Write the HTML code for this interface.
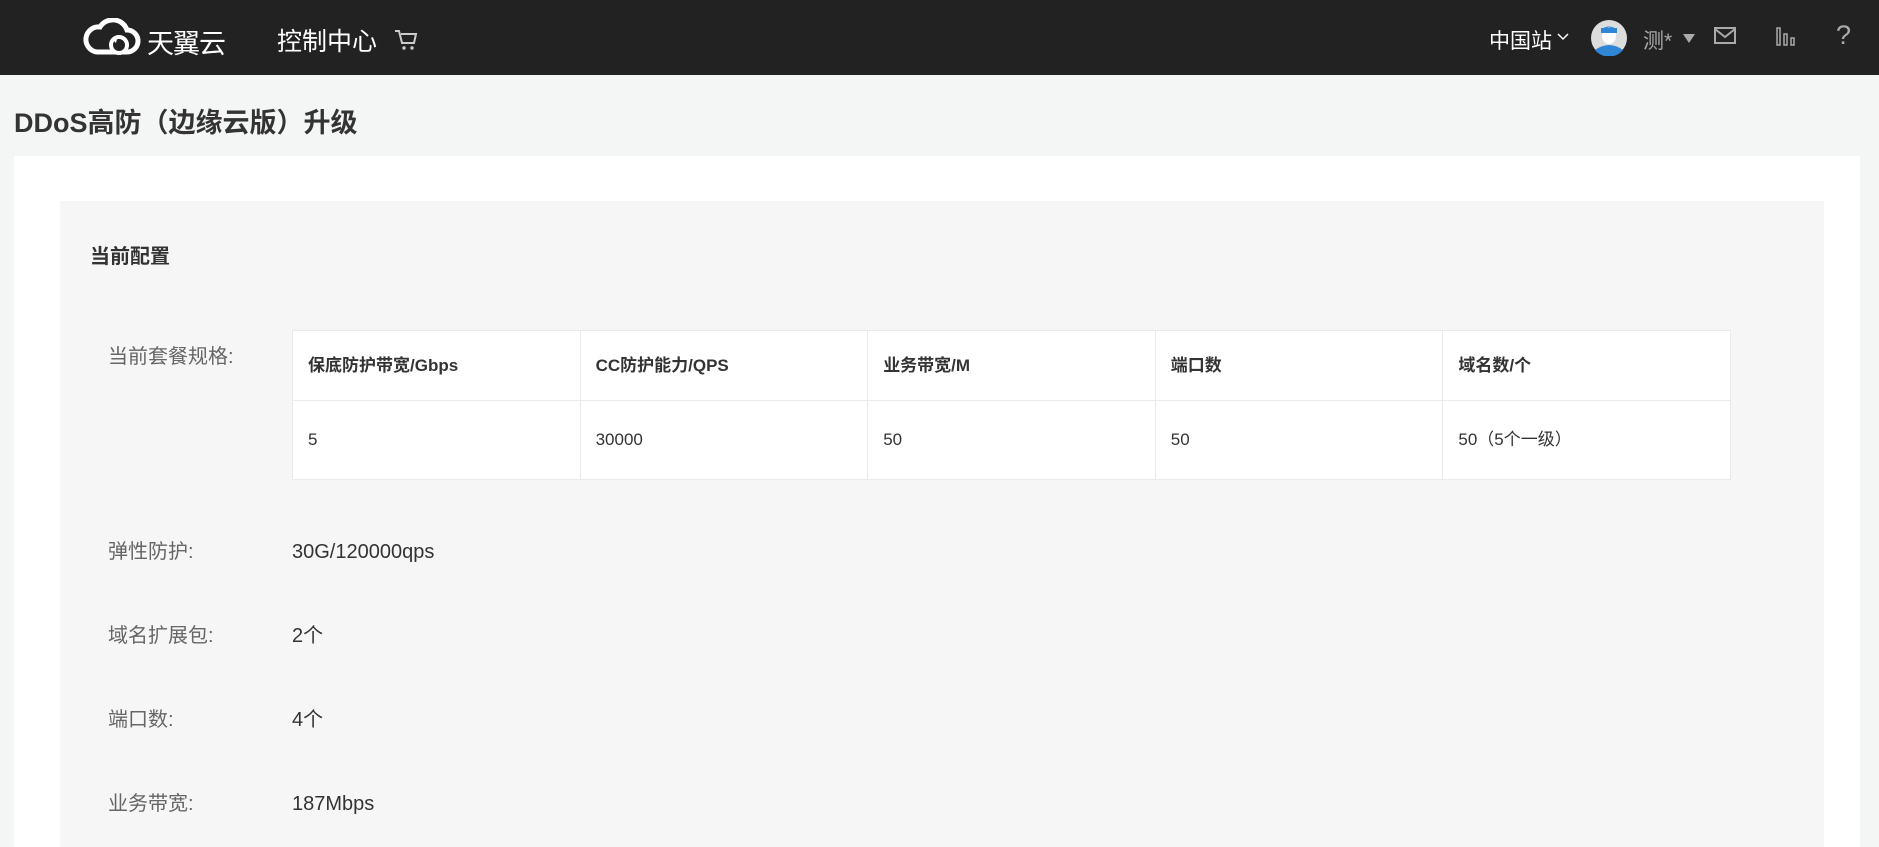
<!DOCTYPE html>
<html><head><meta charset="utf-8">
<style>
*{margin:0;padding:0;box-sizing:border-box}
html,body{width:1879px;height:847px;overflow:hidden}
body{background:#f4f5f5;font-family:"Liberation Sans","Noto Sans CJK SC",sans-serif;position:relative}
.hd{position:absolute;left:0;top:0;width:1879px;height:75px;background:#222}
.abs{position:absolute;white-space:nowrap}
.panel{position:absolute;left:14px;top:156px;width:1846px;height:691px;background:#fff}
.box{position:absolute;left:60px;top:201px;width:1764px;height:646px;background:#f6f6f6}
.lbl{position:absolute;left:108px;font-size:20px;color:#666;line-height:24px}
.val{position:absolute;left:292px;font-size:20px;color:#333;line-height:24px}
table{position:absolute;left:292px;top:330px;width:1439px;border-collapse:collapse;background:#fff}
td{border:1px solid #e8eaee;font-size:17px;color:#333;padding:0 15px;width:287px;line-height:20px;vertical-align:middle}
tr.h td{height:70px;font-weight:bold}
tr.b td{height:79px}
</style></head><body>
<div class="hd"></div>
<svg class="abs" style="left:83px;top:18px" width="58" height="38" viewBox="0 0 58 38">
<path d="M14 34 H44 A11 11 0 0 0 44 12 A15 15 0 0 0 17 9 A12 12 0 0 0 14 34 Z" fill="none" stroke="#fff" stroke-width="5"/>
<circle cx="36" cy="27" r="8" fill="#222" stroke="#fff" stroke-width="4"/>
<path d="M30 22 l4 -1 l-1 4z" fill="#fff"/>
</svg>
<div class="abs" style="left:147px;top:22px;font-size:27px;color:#fff;letter-spacing:-1px">天翼云</div>
<div class="abs" style="left:277px;top:22px;font-size:25px;color:#fff">控制中心</div>
<svg class="abs" style="left:394px;top:29px" width="24" height="22" viewBox="0 0 24 22"><path d="M1 2h4l3 12h12l2-9H7" fill="none" stroke="#ccc" stroke-width="2"/><circle cx="10" cy="19" r="1.7" fill="#ccc"/><circle cx="18" cy="19" r="1.7" fill="#ccc"/></svg>
<div class="abs" style="left:1489px;top:25px;font-size:21px;color:#fff">中国站</div>
<svg class="abs" style="left:1557px;top:33px" width="12" height="8"><path d="M1 1l5 5 5-5" fill="none" stroke="#fff" stroke-width="1.5"/></svg>
<svg class="abs" style="left:1591px;top:20px" width="36" height="36" viewBox="0 0 36 36"><circle cx="18" cy="18" r="18" fill="#ddd"/><path d="M4 30 Q18 20 32 30 A18 18 0 0 1 4 30Z" fill="#2e86d4"/><ellipse cx="18" cy="16" rx="7" ry="8" fill="#fff"/><path d="M10 13 Q18 2 26 13 L25 9 Q18 4 11 9Z" fill="#2e86d4"/><rect x="10" y="8" width="16" height="5" fill="#2e86d4"/></svg>
<div class="abs" style="left:1643px;top:25px;font-size:21px;color:#aaa">测*</div>
<svg class="abs" style="left:1683px;top:34px" width="12" height="9"><path d="M0 0h12l-6 9z" fill="#aaa"/></svg>
<svg class="abs" style="left:1714px;top:27px" width="22" height="17"><rect x="1" y="1" width="20" height="15" fill="none" stroke="#aaa" stroke-width="2"/><path d="M1 2l10 8 10-8" fill="none" stroke="#aaa" stroke-width="2"/></svg>
<svg class="abs" style="left:1776px;top:26px" width="20" height="20"><rect x="1" y="2" width="3" height="17" fill="none" stroke="#aaa" stroke-width="1.5"/><rect x="8" y="8" width="3" height="11" fill="none" stroke="#aaa" stroke-width="1.5"/><rect x="15" y="12" width="3" height="7" fill="none" stroke="#aaa" stroke-width="1.5"/></svg>
<div class="abs" style="left:1836px;top:20px;font-size:27px;color:#aaa">?</div>

<div class="abs" style="left:14px;top:101px;font-size:27px;font-weight:bold;color:#333">DDoS高防（边缘云版）升级</div>
<div class="panel"></div>
<div class="box"></div>
<div class="abs" style="left:90px;top:240px;font-size:20px;font-weight:bold;color:#333">当前配置</div>
<div class="lbl" style="top:345px">当前套餐规格:</div>
<table>
<tr class="h"><td>保底防护带宽/Gbps</td><td>CC防护能力/QPS</td><td>业务带宽/M</td><td>端口数</td><td>域名数/个</td></tr>
<tr class="b"><td>5</td><td>30000</td><td>50</td><td>50</td><td>50（5个一级）</td></tr>
</table>
<div class="lbl" style="top:540px">弹性防护:</div><div class="val" style="top:540px">30G/120000qps</div>
<div class="lbl" style="top:624px">域名扩展包:</div><div class="val" style="top:624px">2个</div>
<div class="lbl" style="top:708px">端口数:</div><div class="val" style="top:708px">4个</div>
<div class="lbl" style="top:792px">业务带宽:</div><div class="val" style="top:792px">187Mbps</div>
</body></html>
